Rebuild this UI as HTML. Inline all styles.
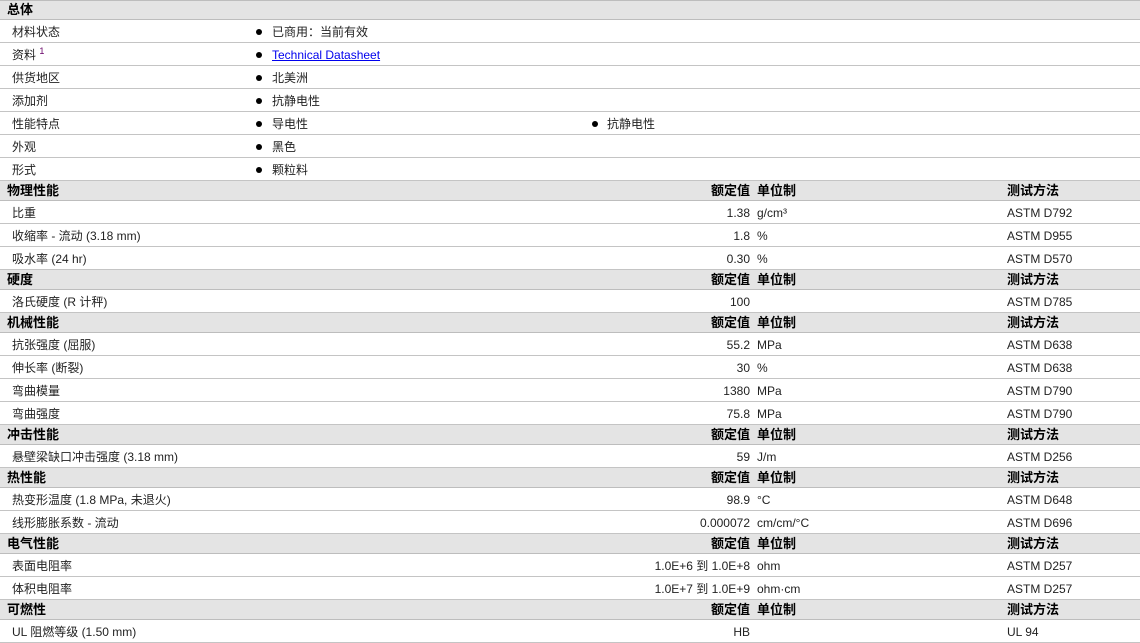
<!DOCTYPE html><html><head><meta charset="utf-8"><style>
body{margin:0;width:1140px;height:642px;overflow:hidden;background:#fff;font-family:"Liberation Sans","Noto Sans CJK SC",sans-serif;font-size:12px;color:#222}
.r{position:relative;height:22px;border-bottom:1px solid #c4c4c4;white-space:nowrap}
.h{height:19px;background:#e4e4e4;border-bottom:1px solid #bdbdbd;font-weight:bold;font-size:13px;color:#000}
.r span{position:absolute;top:1px;height:22px;line-height:22px}
.h span{top:0;height:19px;line-height:19px}
.l{left:12px}.h .l{left:7px}
.t{left:272px}.t2{left:607px}
.v{right:390px;text-align:right}.u{left:757px}.m{left:1007px}
.r i{position:absolute;top:9px;width:6px;height:6px;border-radius:50%;background:#000}
.b{left:256px}.b2{left:592px}
a{color:#00e;text-decoration:underline}
sup{font-size:9px;color:#606;vertical-align:5px;line-height:0}
</style></head><body>
<div style="border-top:1px solid #bdbdbd"></div>
<div class="r h" style="height:18px"><span class="l" style="height:18px;line-height:18px">总体</span></div>
<div class="r"><span class="l">材料状态</span><i class="b"></i><span class="t">已商用：当前有效</span></div>
<div class="r"><span class="l">资料 <sup>1</sup></span><i class="b"></i><span class="t"><a>Technical Datasheet</a></span></div>
<div class="r"><span class="l">供货地区</span><i class="b"></i><span class="t">北美洲</span></div>
<div class="r"><span class="l">添加剂</span><i class="b"></i><span class="t">抗静电性</span></div>
<div class="r"><span class="l">性能特点</span><i class="b"></i><span class="t">导电性</span><i class="b2"></i><span class="t2">抗静电性</span></div>
<div class="r"><span class="l">外观</span><i class="b"></i><span class="t">黑色</span></div>
<div class="r"><span class="l">形式</span><i class="b"></i><span class="t">颗粒料</span></div>
<div class="r h"><span class="l">物理性能</span><span class="v">额定值</span><span class="u">单位制</span><span class="m">测试方法</span></div>
<div class="r"><span class="l">比重</span><span class="v">1.38</span><span class="u">g/cm³</span><span class="m">ASTM D792</span></div>
<div class="r"><span class="l">收缩率 - 流动 (3.18 mm)</span><span class="v">1.8</span><span class="u">%</span><span class="m">ASTM D955</span></div>
<div class="r"><span class="l">吸水率 (24 hr)</span><span class="v">0.30</span><span class="u">%</span><span class="m">ASTM D570</span></div>
<div class="r h"><span class="l">硬度</span><span class="v">额定值</span><span class="u">单位制</span><span class="m">测试方法</span></div>
<div class="r"><span class="l">洛氏硬度 (R 计秤)</span><span class="v">100</span><span class="m">ASTM D785</span></div>
<div class="r h"><span class="l">机械性能</span><span class="v">额定值</span><span class="u">单位制</span><span class="m">测试方法</span></div>
<div class="r"><span class="l">抗张强度 (屈服)</span><span class="v">55.2</span><span class="u">MPa</span><span class="m">ASTM D638</span></div>
<div class="r"><span class="l">伸长率 (断裂)</span><span class="v">30</span><span class="u">%</span><span class="m">ASTM D638</span></div>
<div class="r"><span class="l">弯曲模量</span><span class="v">1380</span><span class="u">MPa</span><span class="m">ASTM D790</span></div>
<div class="r"><span class="l">弯曲强度</span><span class="v">75.8</span><span class="u">MPa</span><span class="m">ASTM D790</span></div>
<div class="r h"><span class="l">冲击性能</span><span class="v">额定值</span><span class="u">单位制</span><span class="m">测试方法</span></div>
<div class="r"><span class="l">悬壁梁缺口冲击强度 (3.18 mm)</span><span class="v">59</span><span class="u">J/m</span><span class="m">ASTM D256</span></div>
<div class="r h"><span class="l">热性能</span><span class="v">额定值</span><span class="u">单位制</span><span class="m">测试方法</span></div>
<div class="r"><span class="l">热变形温度 (1.8 MPa, 未退火)</span><span class="v">98.9</span><span class="u">°C</span><span class="m">ASTM D648</span></div>
<div class="r"><span class="l">线形膨胀系数 - 流动</span><span class="v">0.000072</span><span class="u">cm/cm/°C</span><span class="m">ASTM D696</span></div>
<div class="r h"><span class="l">电气性能</span><span class="v">额定值</span><span class="u">单位制</span><span class="m">测试方法</span></div>
<div class="r"><span class="l">表面电阻率</span><span class="v">1.0E+6 到 1.0E+8</span><span class="u">ohm</span><span class="m">ASTM D257</span></div>
<div class="r"><span class="l">体积电阻率</span><span class="v">1.0E+7 到 1.0E+9</span><span class="u">ohm·cm</span><span class="m">ASTM D257</span></div>
<div class="r h"><span class="l">可燃性</span><span class="v">额定值</span><span class="u">单位制</span><span class="m">测试方法</span></div>
<div class="r"><span class="l">UL 阻燃等级 (1.50 mm)</span><span class="v">HB</span><span class="m">UL 94</span></div>
</body></html>
